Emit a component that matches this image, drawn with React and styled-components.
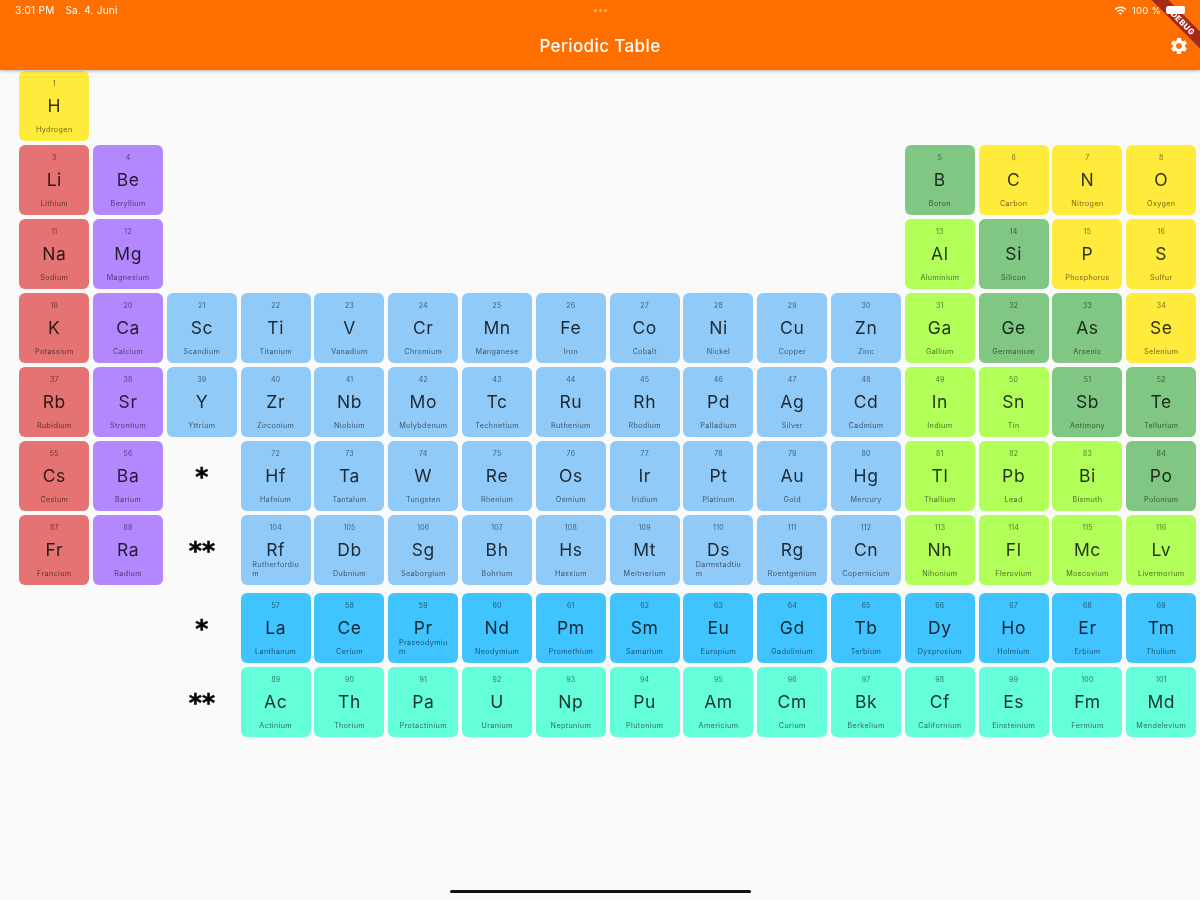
import React from "react";
import styled, { createGlobalStyle } from "styled-components";
import { MdSettings, MdWifi } from "react-icons/md";

const COLORS = {
  alkali: "#e57373",
  earth: "#b388ff",
  transition: "#90caf9",
  nonmetal: "#ffeb3b",
  post: "#b2ff59",
  metalloid: "#81c784",
  lanthanide: "#40c4ff",
  actinide: "#64ffda",
};

const seq = (start, col, kind, text) =>
  text.split(" ").map((item, i) => {
    const [symbol, name] = item.split(":");
    return { col: col + i, number: start + i, symbol, name, kind };
  });

// "\n" marks the long names that break onto a second line
const MAIN_ROWS = [
  seq(1, 1, "nonmetal", "H:Hydrogen"),
  [
    ...seq(3, 1, "alkali", "Li:Lithium"),
    ...seq(4, 2, "earth", "Be:Beryllium"),
    ...seq(5, 13, "metalloid", "B:Boron"),
    ...seq(6, 14, "nonmetal", "C:Carbon N:Nitrogen O:Oxygen"),
  ],
  [
    ...seq(11, 1, "alkali", "Na:Sodium"),
    ...seq(12, 2, "earth", "Mg:Magnesium"),
    ...seq(13, 13, "post", "Al:Aluminium"),
    ...seq(14, 14, "metalloid", "Si:Silicon"),
    ...seq(15, 15, "nonmetal", "P:Phosphorus S:Sulfur"),
  ],
  [
    ...seq(19, 1, "alkali", "K:Potassium"),
    ...seq(20, 2, "earth", "Ca:Calcium"),
    ...seq(21, 3, "transition", "Sc:Scandium Ti:Titanium V:Vanadium Cr:Chromium Mn:Manganese Fe:Iron Co:Cobalt Ni:Nickel Cu:Copper Zn:Zinc"),
    ...seq(31, 13, "post", "Ga:Gallium"),
    ...seq(32, 14, "metalloid", "Ge:Germanium As:Arsenic"),
    ...seq(34, 16, "nonmetal", "Se:Selenium"),
  ],
  [
    ...seq(37, 1, "alkali", "Rb:Rubidium"),
    ...seq(38, 2, "earth", "Sr:Strontium"),
    ...seq(39, 3, "transition", "Y:Yttrium Zr:Zirconium Nb:Niobium Mo:Molybdenum Tc:Technetium Ru:Ruthenium Rh:Rhodium Pd:Palladium Ag:Silver Cd:Cadmium"),
    ...seq(49, 13, "post", "In:Indium Sn:Tin"),
    ...seq(51, 15, "metalloid", "Sb:Antimony Te:Tellurium"),
  ],
  [
    ...seq(55, 1, "alkali", "Cs:Cesium"),
    ...seq(56, 2, "earth", "Ba:Barium"),
    ...seq(72, 4, "transition", "Hf:Hafnium Ta:Tantalum W:Tungsten Re:Rhenium Os:Osmium Ir:Iridium Pt:Platinum Au:Gold Hg:Mercury"),
    ...seq(81, 13, "post", "Tl:Thallium Pb:Lead Bi:Bismuth"),
    ...seq(84, 16, "metalloid", "Po:Polonium"),
  ],
  [
    ...seq(87, 1, "alkali", "Fr:Francium"),
    ...seq(88, 2, "earth", "Ra:Radium"),
    ...seq(104, 4, "transition", "Rf:Rutherfordiu\nm Db:Dubnium Sg:Seaborgium Bh:Bohrium Hs:Hassium Mt:Meitnerium Ds:Darmstadtiu\nm Rg:Roentgenium Cn:Copernicium"),
    ...seq(113, 13, "post", "Nh:Nihonium Fl:Flerovium Mc:Moscovium Lv:Livermorium"),
  ],
];

const SERIES_ROWS = [
  seq(57, 4, "lanthanide", "La:Lanthanum Ce:Cerium Pr:Praseodymiu\nm Nd:Neodymium Pm:Promethium Sm:Samarium Eu:Europium Gd:Gadolinium Tb:Terbium Dy:Dysprosium Ho:Holmium Er:Erbium Tm:Thulium"),
  seq(89, 4, "actinide", "Ac:Actinium Th:Thorium Pa:Protactinium U:Uranium Np:Neptunium Pu:Plutonium Am:Americium Cm:Curium Bk:Berkelium Cf:Californium Es:Einsteinium Fm:Fermium Md:Mendelevium"),
];

const GlobalStyle = createGlobalStyle`
  html, body {
    margin: 0;
    background: #fafafa;
    overflow: hidden;
  }
  body {
    font-family: Inter, "Liberation Sans", sans-serif;
  }
`;

const Page = styled.div`
  position: relative;
  width: 1200px;
  height: 900px;
  overflow: hidden;
  background: #fafafa;
  filter: blur(0.6px);
`;

const AppBar = styled.header`
  position: relative;
  height: 70px;
  background: #ff6f00;
  color: #fff;
  box-shadow: 0 1px 3px rgba(0, 0, 0, 0.3);
  display: flex;
  flex-direction: column;
`;

const StatusBar = styled.div`
  height: 20px;
  padding: 0 15px;
  display: grid;
  grid-template-columns: 1fr auto 1fr;
  align-items: center;
  font-size: 9.5px;
  letter-spacing: 0.25px;
`;

const Clock = styled.div`
  display: flex;
  gap: 11px;
  font-size: 10px;
`;

const Dots = styled.div`
  display: flex;
  gap: 2px;

  i {
    width: 3px;
    height: 3px;
    border-radius: 50%;
    background: #ffb066;
  }
`;

const Indicators = styled.div`
  position: relative;
  z-index: 3;
  display: flex;
  align-items: center;
  justify-content: flex-end;
  gap: 5px;
`;

const Battery = styled.span`
  width: 19px;
  height: 8px;
  border-radius: 2px;
  background: #fff;
`;

const TitleRow = styled.div`
  flex: 1;
  position: relative;
  display: flex;
  align-items: center;
  justify-content: center;
`;

const Title = styled.h1`
  margin: 2px 0 0;
  font-size: 17px;
  font-weight: 500;
  letter-spacing: 0.4px;
`;

const SettingsButton = styled.span`
  position: absolute;
  right: 11px;
  top: 16px;
  display: flex;
  font-size: 20px;
`;

const Ribbon = styled.div`
  position: absolute;
  z-index: 2;
  top: 17px;
  right: -28px;
  width: 90px;
  height: 12px;
  line-height: 12px;
  transform: rotate(45deg);
  background: #a5291a;
  color: #fff;
  font-size: 8px;
  font-weight: 800;
  text-align: center;
  letter-spacing: 0.5px;
`;

const Content = styled.main`
  padding: 1px 0 0 19.3px;
`;

const TableGrid = styled.div`
  display: grid;
  grid-template-columns: repeat(16, 70px);
  grid-auto-rows: 70px;
  column-gap: 3.8px;
  row-gap: 4px;
  margin-bottom: 8px;
`;

const Tile = styled.div`
  grid-column: ${(p) => p.$col};
  grid-row: ${(p) => p.$row};
  border-radius: 6px;
  background: ${(p) => COLORS[p.$kind]};
  color: rgba(0, 0, 0, 0.8);
  display: grid;
  grid-template-rows: 23px 24px 23px;
  justify-items: center;
`;

const AtomicNumber = styled.span`
  align-self: center;
  padding-top: 1px;
  font-size: 7px;
  letter-spacing: 0.2px;
  opacity: 0.7;
`;

const Symbol = styled.span`
  align-self: center;
  font-size: 17.5px;
  line-height: 24px;
  letter-spacing: 0.6px;
`;

const ElementName = styled.span`
  align-self: end;
  padding-bottom: 7px;
  font-size: 7.2px;
  line-height: 9px;
  letter-spacing: 0.38px;
  text-align: left;
  white-space: pre-line;
  opacity: 0.75;
`;

const Star = styled.div`
  grid-column: 3;
  grid-row: ${(p) => p.$row};
  display: flex;
  align-items: center;
  justify-content: center;
  font-family: "DejaVu Sans", sans-serif;
  font-size: 25px;
  font-weight: 700;
  color: #000;
  -webkit-text-stroke: 0.5px #000;
`;

const HomeBar = styled.div`
  position: absolute;
  left: 450px;
  bottom: 7px;
  width: 301px;
  height: 3px;
  border-radius: 2px;
  background: #111;
`;

function ElementTile({ element, row }) {
  return (
    <Tile $col={element.col} $row={row} $kind={element.kind}>
      <AtomicNumber>{element.number}</AtomicNumber>
      <Symbol>{element.symbol}</Symbol>
      <ElementName>{element.name}</ElementName>
    </Tile>
  );
}

function App() {
  return (
    <Page>
      <GlobalStyle />
      <AppBar>
        <StatusBar>
          <Clock>
            <span>3:01 PM</span>
            <span>Sa. 4. Juni</span>
          </Clock>
          <Dots>
            <i />
            <i />
            <i />
          </Dots>
          <Indicators>
            <MdWifi size={13} />
            <span>100 %</span>
            <Battery />
          </Indicators>
        </StatusBar>
        <TitleRow>
          <Title>Periodic Table</Title>
          <SettingsButton>
            <MdSettings />
          </SettingsButton>
        </TitleRow>
      </AppBar>
      <Ribbon>DEBUG</Ribbon>
      <Content>
        <TableGrid>
          {MAIN_ROWS.map((items, r) =>
            items.map((element) => (
              <ElementTile key={element.symbol} element={element} row={r + 1} />
            ))
          )}
          <Star $row={6}>*</Star>
          <Star $row={7}>**</Star>
        </TableGrid>
        <TableGrid>
          {SERIES_ROWS.map((items, r) =>
            items.map((element) => (
              <ElementTile key={element.symbol} element={element} row={r + 1} />
            ))
          )}
          <Star $row={1}>*</Star>
          <Star $row={2}>**</Star>
        </TableGrid>
      </Content>
      <HomeBar />
    </Page>
  );
}

export default App;
